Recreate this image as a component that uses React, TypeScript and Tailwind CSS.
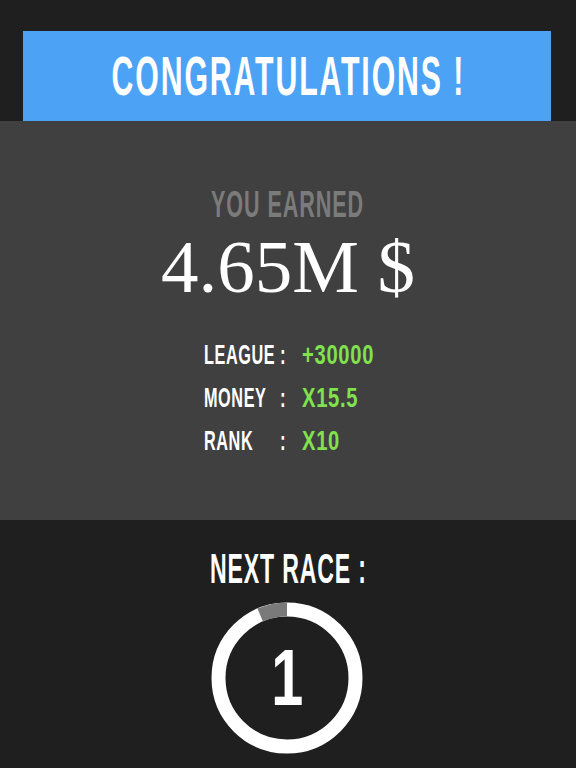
import React from "react";

const SANS = "font-['Liberation_Sans',Arial,sans-serif]";

function Ring() {
  return (
    <svg width="152" height="152" viewBox="0 0 152 152">
      <circle cx="76" cy="76" r="68.5" fill="none" stroke="#ffffff" strokeWidth="14" />
      <path d="M76 7.5 A68.5 68.5 0 0 0 49.2 12.95" fill="none" stroke="#7a7a7a" strokeWidth="14" />
    </svg>
  );
}

function Row({ label, value }: { label: string; value: string }) {
  return (
    <div className="flex h-[28px] leading-[28px] text-[28px] font-bold">
      <div className="w-[76px]">
        <span className="inline-block origin-left scale-x-[0.58] tracking-[1px] whitespace-nowrap text-white">{label}</span>
      </div>
      <div className="w-[22px]">
        <span className="inline-block origin-left scale-x-[0.6] text-white">:</span>
      </div>
      <div className="w-[70px]">
        <span className="inline-block origin-left scale-x-[0.72] tracking-[1px] whitespace-nowrap text-[#80e24c]">{value}</span>
      </div>
    </div>
  );
}

export default function App() {
  return (
    <div className={`w-[576px] h-[768px] overflow-hidden bg-[#1f1f1f] ${SANS}`}>
      <div className="pt-[31px] pl-[23px] pr-[25px]">
        <div className="h-[90px] bg-[#4ca3f6] flex items-center justify-center">
          <span className="inline-block scale-x-[0.54] tracking-[3.5px] whitespace-nowrap text-white font-bold text-[56px] leading-[56px] mt-[-1px] ml-[2px]">
            CONGRATULATIONS !
          </span>
        </div>
      </div>
      <div className="h-[399px] bg-[#404040] flex flex-col items-center">
        <div className="mt-[66px] h-[36px] text-[36px] leading-[36px] font-bold text-[#7b7b7b]">
          <span className="inline-block scale-x-[0.6] tracking-[1.5px] whitespace-nowrap">YOU EARNED</span>
        </div>
        <div className="mt-[6px] h-[75px] text-[75px] leading-[75px] text-white font-['Liberation_Serif','Times_New_Roman',serif] whitespace-nowrap">
          4.65M $
        </div>
        <div className="mt-[37px] flex flex-col gap-[15px] w-[168px]">
          <Row label="LEAGUE" value="+30000" />
          <Row label="MONEY" value="X15.5" />
          <Row label="RANK" value="X10" />
        </div>
      </div>
      <div className="flex flex-col items-center">
        <div className="mt-[28px] h-[42px] text-[42px] leading-[42px] font-bold text-white">
          <span className="inline-block scale-x-[0.55] tracking-[1.5px] whitespace-nowrap">NEXT RACE :</span>
        </div>
        <div className="mt-[12px] relative w-[152px] h-[152px] ml-[-2px]">
          <Ring />
          <div className="absolute inset-0 flex items-center justify-center text-white font-bold text-[80px] leading-[80px]">
            <span className="inline-block scale-x-[0.72]">1</span>
          </div>
        </div>
      </div>
    </div>
  );
}
